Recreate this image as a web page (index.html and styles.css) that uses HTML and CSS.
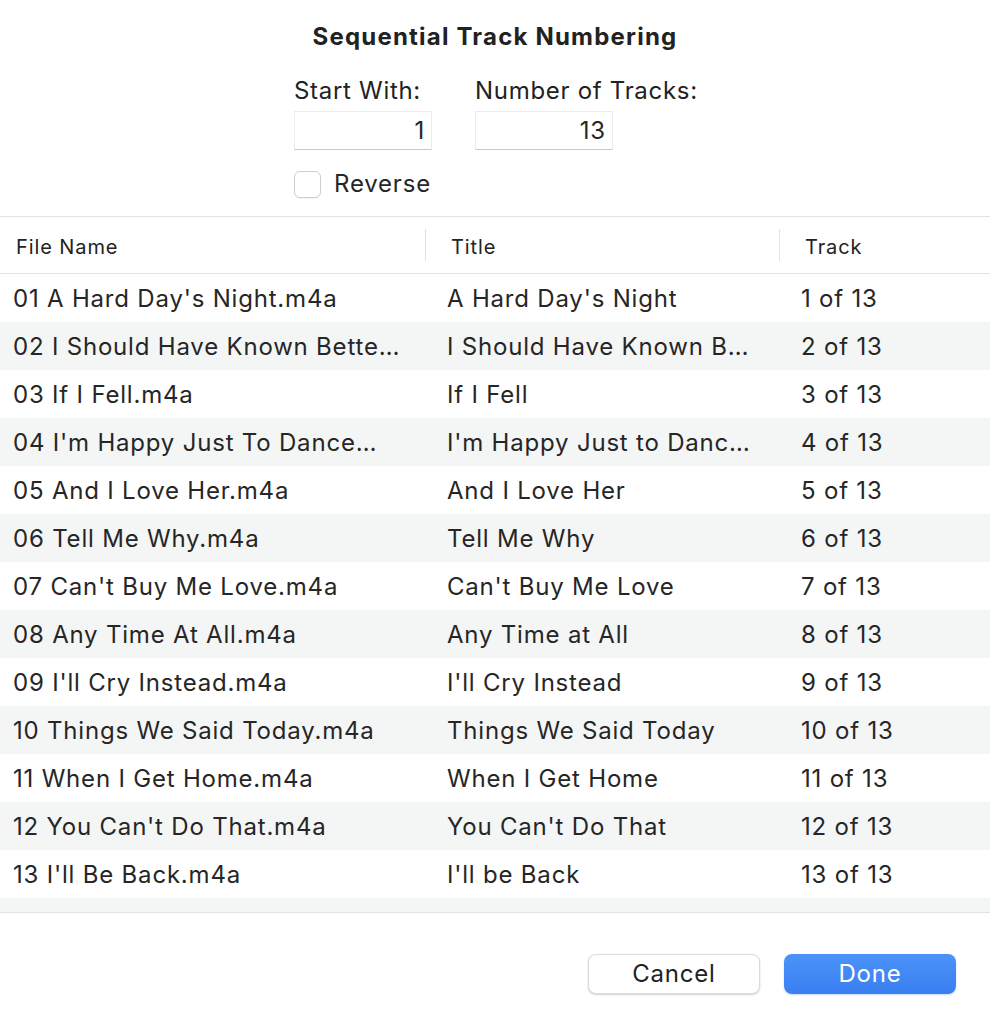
FILE: index.html
```html
<!DOCTYPE html>
<html>
<head>
<meta charset="utf-8">
<link rel="stylesheet" href="styles.css">
</head>
<body>
<div class="dialog">
  <div class="top">
    <h1 class="title">Sequential Track Numbering</h1>
    <div class="form">
      <div class="fields">
        <div class="field">
          <div class="label">Start With:</div>
          <div class="input">1</div>
        </div>
        <div class="field">
          <div class="label">Number of Tracks:</div>
          <div class="input">13</div>
        </div>
      </div>
      <label class="check"><span class="box"></span><span>Reverse</span></label>
    </div>
  </div>
  <div class="table">
    <div class="thead">
      <div class="th c1">File Name</div>
      <div class="th c2">Title</div>
      <div class="th c3">Track</div>
    </div>
    <div class="tbody">
      <div class="tr"><div class="td c1">01 A Hard Day's Night.m4a</div><div class="td c2">A Hard Day's Night</div><div class="td c3">1 of 13</div></div>
      <div class="tr"><div class="td c1">02 I Should Have Known Bette…</div><div class="td c2">I Should Have Known B…</div><div class="td c3">2 of 13</div></div>
      <div class="tr"><div class="td c1">03 If I Fell.m4a</div><div class="td c2">If I Fell</div><div class="td c3">3 of 13</div></div>
      <div class="tr"><div class="td c1">04 I'm Happy Just To Dance…</div><div class="td c2">I'm Happy Just to Danc…</div><div class="td c3">4 of 13</div></div>
      <div class="tr"><div class="td c1">05 And I Love Her.m4a</div><div class="td c2">And I Love Her</div><div class="td c3">5 of 13</div></div>
      <div class="tr"><div class="td c1">06 Tell Me Why.m4a</div><div class="td c2">Tell Me Why</div><div class="td c3">6 of 13</div></div>
      <div class="tr"><div class="td c1">07 Can't Buy Me Love.m4a</div><div class="td c2">Can't Buy Me Love</div><div class="td c3">7 of 13</div></div>
      <div class="tr"><div class="td c1">08 Any Time At All.m4a</div><div class="td c2">Any Time at All</div><div class="td c3">8 of 13</div></div>
      <div class="tr"><div class="td c1">09 I'll Cry Instead.m4a</div><div class="td c2">I'll Cry Instead</div><div class="td c3">9 of 13</div></div>
      <div class="tr"><div class="td c1">10 Things We Said Today.m4a</div><div class="td c2">Things We Said Today</div><div class="td c3">10 of 13</div></div>
      <div class="tr"><div class="td c1">11 When I Get Home.m4a</div><div class="td c2">When I Get Home</div><div class="td c3">11 of 13</div></div>
      <div class="tr"><div class="td c1">12 You Can't Do That.m4a</div><div class="td c2">You Can't Do That</div><div class="td c3">12 of 13</div></div>
      <div class="tr"><div class="td c1">13 I'll Be Back.m4a</div><div class="td c2">I'll be Back</div><div class="td c3">13 of 13</div></div>
      <div class="tr filler"></div>
    </div>
  </div>
  <div class="footer">
    <button class="btn cancel">Cancel</button>
    <button class="btn done">Done</button>
  </div>
</div>
</body>
</html>
```
FILE: styles.css
```css
* { box-sizing: border-box; }
html, body { margin: 0; padding: 0; background: #fff; }
body {
  font-family: Inter, "Noto Sans", "Liberation Sans", sans-serif;
  color: #262626;
  width: 990px;
  height: 1020px;
  overflow: hidden;
}
.dialog { width: 990px; }
.top {
  height: 217px;
  border-bottom: 1px solid #e2e2e2;
  padding-top: 22px;
}
.title {
  margin: 0;
  text-align: center;
  font-size: 24px;
  font-weight: 700;
  line-height: 30px;
  letter-spacing: 1.2px;
  color: #222;
}
.form {
  margin-left: 294px;
  margin-top: 24px;
}
.fields {
  display: flex;
  gap: 43px;
}
.field {
  display: flex;
  flex-direction: column;
  width: 138px;
}
.field + .field { width: auto; }
.label {
  font-size: 24px;
  line-height: 30px;
  letter-spacing: 0.7px;
  white-space: nowrap;
  color: #222;
}
.input {
  margin-top: 5px;
  width: 138px;
  height: 39px;
  background: #fff;
  border: 1px solid #ececec;
  border-bottom: 1px solid #c9c9c9;
  text-align: right;
  font-size: 24px;
  letter-spacing: 0.8px;
  line-height: 38px;
  padding-right: 6px;
}
.check {
  display: flex;
  align-items: center;
  gap: 13px;
  margin-top: 20px;
  font-size: 24px;
  letter-spacing: 0.8px;
  line-height: 28px;
}
.box {
  width: 27px;
  height: 27px;
  border: 1px solid #cfcfcf;
  border-radius: 6px;
  background: #fff;
  box-shadow: 0 1px 1px rgba(0,0,0,0.05);
}
.thead {
  display: flex;
  height: 57px;
  border-bottom: 1px solid #e2e2e2;
  align-items: center;
}
.th {
  font-size: 20px;
  letter-spacing: 0.9px;
  line-height: 24px;
  height: 32px;
  padding-top: 3px;
  display: flex;
  align-items: center;
  color: #222;
}
.th.c1 { width: 426px; padding-left: 16px; border-right: 1px solid #e2e2e2; }
.th.c2 { width: 354px; padding-left: 25px; border-right: 1px solid #e2e2e2; }
.th.c3 { padding-left: 25px; }
.tbody { border-bottom: 1px solid #e2e2e2; }
.tr {
  display: flex;
  height: 48px;
  align-items: center;
}
.tr:nth-child(even) { background: #f4f5f5; }
.tr.filler { height: 14px; }
.td {
  font-size: 24px;
  letter-spacing: 0.8px;
  line-height: 30px;
  padding-top: 2px;
  white-space: nowrap;
  overflow: hidden;
  color: #262626;
}
.td.c1 { width: 434px; padding-left: 13px; }
.td.c2 { width: 354px; padding-left: 13px; }
.td.c3 { padding-left: 13px; }
.footer {
  display: flex;
  justify-content: flex-end;
  gap: 24px;
  padding-top: 41px;
  padding-right: 34px;
}
.btn {
  width: 172px;
  height: 40px;
  border-radius: 8px;
  font-family: inherit;
  font-size: 24px;
  letter-spacing: 0.8px;
  line-height: 38px;
  padding: 0;
  cursor: default;
}
.cancel {
  background: #fff;
  color: #222;
  border: 1px solid #dadada;
  box-shadow: 0 1px 2px rgba(0,0,0,0.18);
}
.done {
  background: linear-gradient(#4b93f8, #3a7ef2);
  color: #fff;
  border: none;
  box-shadow: 0 1px 2px rgba(40,100,220,0.25);
}
```
